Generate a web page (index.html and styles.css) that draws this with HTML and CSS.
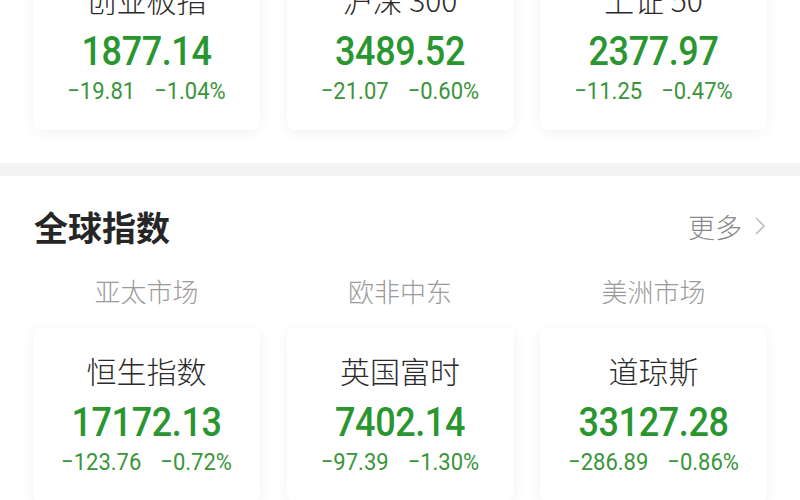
FILE: index.html
```html
<!DOCTYPE html>
<html lang="zh-CN">
  <head>
    <meta charset="UTF-8" />
    <meta name="viewport" content="width=device-width, initial-scale=1.0" />
    <title>行情 - 指数</title>
    <link rel="stylesheet" href="styles.css">
  </head>
  <body>
    <section class="domestic">
      <div class="card-row">
        <div class="card">
          <div class="card-name">创业板指</div>
          <div class="card-value"><span>1877.14</span></div>
          <div class="card-change"><span>−19.81</span><span>−1.04%</span></div>
        </div>
        <div class="card">
          <div class="card-name">沪深 300</div>
          <div class="card-value"><span>3489.52</span></div>
          <div class="card-change"><span>−21.07</span><span>−0.60%</span></div>
        </div>
        <div class="card">
          <div class="card-name">上证 50</div>
          <div class="card-value"><span>2377.97</span></div>
          <div class="card-change"><span>−11.25</span><span>−0.47%</span></div>
        </div>
      </div>
    </section>

    <div class="divider"></div>

    <section class="global">
      <div class="section-head">
        <h2>全球指数</h2>
        <a class="more" href="#">更多
          <svg width="12" height="20" viewBox="0 0 12 20"><polyline points="2,2 10,10 2,18" fill="none" stroke="#bdbdbd" stroke-width="1.6" /></svg>
        </a>
      </div>

      <div class="region-row">
        <div>亚太市场</div>
        <div>欧非中东</div>
        <div>美洲市场</div>
      </div>

      <div class="card-row">
        <div class="card">
          <div class="card-name">恒生指数</div>
          <div class="card-value"><span>17172.13</span></div>
          <div class="card-change"><span>−123.76</span><span>−0.72%</span></div>
        </div>
        <div class="card">
          <div class="card-name">英国富时</div>
          <div class="card-value"><span>7402.14</span></div>
          <div class="card-change"><span>−97.39</span><span>−1.30%</span></div>
        </div>
        <div class="card">
          <div class="card-name">道琼斯</div>
          <div class="card-value"><span>33127.28</span></div>
          <div class="card-change"><span>−286.89</span><span>−0.86%</span></div>
        </div>
      </div>
    </section>
  </body>
</html>
```

FILE: styles.css
```css
body {
  margin: 0;
  background-color: #fff;
  font-family: Roboto, "Noto Sans CJK SC", sans-serif;
  color: #333;
  overflow: hidden;
}
.card-row {
  display: grid;
  grid-template-columns: repeat(3, 227px);
  column-gap: 26.5px;
  padding: 0 33px;
}
.card {
  background-color: #fff;
  border-radius: 8px;
  box-shadow: 0 2px 14px rgba(0, 0, 0, 0.06);
  text-align: center;
  padding: 22px 0 25px;
}
.card-name {
  font-family: "Noto Sans CJK SC", sans-serif;
  font-size: 30px;
  font-weight: 300;
  line-height: 40px;
  color: #2b2b2b;
}
/* the app's digits are narrow and tall */
.card-value {
  margin-top: 10px;
  font-size: 36px;
  font-weight: 500;
  line-height: 44px;
  letter-spacing: -0.4px;
  color: #2a9630;
}
.card-value span {
  display: inline-block;
  transform: scaleY(1.14);
}
.card-change {
  margin-top: 4px;
  display: flex;
  justify-content: center;
  gap: 19px;
  font-size: 22px;
  line-height: 28px;
  color: #3a953a;
}
.card-change span {
  display: inline-block;
  transform: scaleY(1.1);
}
.domestic {
  margin-top: -43px;
  padding-bottom: 33px;
}
.divider {
  height: 13px;
  background-color: #f4f4f4;
}
.global {
  padding-top: 30px;
}
.section-head {
  display: flex;
  justify-content: space-between;
  align-items: center;
  padding: 0 34px;
  height: 40px;
}
.section-head h2 {
  margin: 0;
  font-family: "Noto Sans CJK SC", sans-serif;
  font-size: 34px;
  font-weight: 700;
  color: #262626;
}
.more {
  display: flex;
  align-items: center;
  gap: 12px;
  font-family: "Noto Sans CJK SC", sans-serif;
  font-size: 27px;
  font-weight: 300;
  color: #8a8a8a;
  text-decoration: none;
}
.region-row {
  display: grid;
  grid-template-columns: repeat(3, 227px);
  column-gap: 26.5px;
  padding: 0 33px;
  margin: 30px 0 22px;
  text-align: center;
  font-family: "Noto Sans CJK SC", sans-serif;
  font-size: 26px;
  font-weight: 300;
  line-height: 30px;
  color: #9a9a9a;
}
```
